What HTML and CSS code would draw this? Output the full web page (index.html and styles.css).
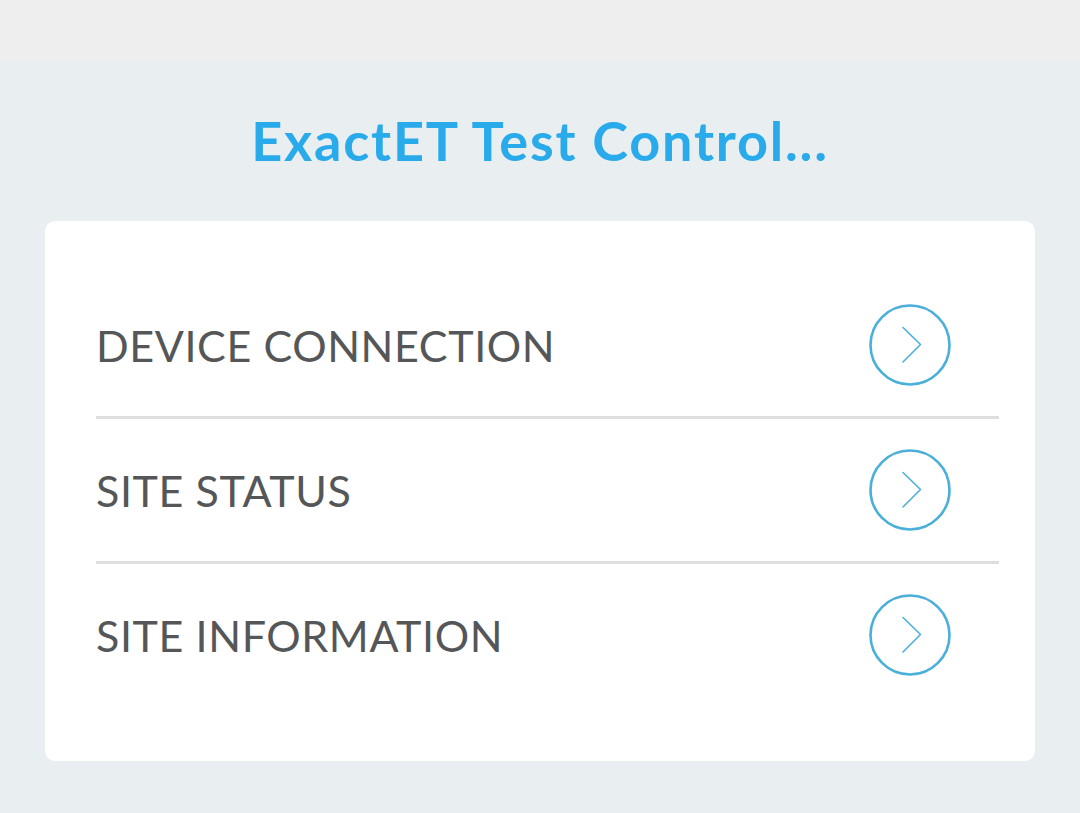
FILE: index.html
```html
<!DOCTYPE html>
<html>
<head>
<meta charset="utf-8">
<link rel="stylesheet" href="styles.css">
</head>
<body>
<div class="topbar"></div>
<main class="screen">
  <h1 class="title">ExactET Test Control...</h1>
  <section class="card">
    <div class="row">
      <span class="label">DEVICE CONNECTION</span>
      <svg class="go" width="82" height="82" viewBox="0 0 82 82"><circle cx="41" cy="41" r="39.5" fill="none" stroke="#4aafd9" stroke-width="2.6"/><path d="M34 23.5 L51.5 40.5 L34 58" fill="none" stroke="#4aafd9" stroke-width="1.6" stroke-linecap="round" stroke-linejoin="round"/></svg>
    </div>
    <div class="row">
      <span class="label">SITE STATUS</span>
      <svg class="go" width="82" height="82" viewBox="0 0 82 82"><circle cx="41" cy="41" r="39.5" fill="none" stroke="#4aafd9" stroke-width="2.6"/><path d="M34 23.5 L51.5 40.5 L34 58" fill="none" stroke="#4aafd9" stroke-width="1.6" stroke-linecap="round" stroke-linejoin="round"/></svg>
    </div>
    <div class="row last">
      <span class="label">SITE INFORMATION</span>
      <svg class="go" width="82" height="82" viewBox="0 0 82 82"><circle cx="41" cy="41" r="39.5" fill="none" stroke="#4aafd9" stroke-width="2.6"/><path d="M34 23.5 L51.5 40.5 L34 58" fill="none" stroke="#4aafd9" stroke-width="1.6" stroke-linecap="round" stroke-linejoin="round"/></svg>
    </div>
  </section>
</main>
</body>
</html>
```
FILE: styles.css
```css
html, body {
  margin: 0;
  padding: 0;
  height: 100%;
}
body {
  background: #e9eef0;
  font-family: Lato, "Open Sans", "Liberation Sans", sans-serif;
}
.topbar {
  height: 61px;
  background: #eeeeee;
}
.screen {
  padding: 0 45px;
}
.title {
  margin: 0;
  height: 160px;
  display: flex;
  align-items: center;
  justify-content: center;
  color: #29aaea;
  font-size: 54px;
  font-weight: 700;
  letter-spacing: 1.8px;
  line-height: 1;
}
.card {
  background: #ffffff;
  border-radius: 10px;
  padding: 53px 36px 55px 51px;
}
.row {
  height: 142px;
  display: flex;
  align-items: center;
  justify-content: space-between;
  border-bottom: 3px solid #dedede;
}
.row.last {
  border-bottom: none;
}
.label {
  color: #545658;
  font-size: 43px;
  font-weight: 400;
  letter-spacing: 0.6px;
}
.go {
  margin-right: 48px;
  display: block;
}
```
